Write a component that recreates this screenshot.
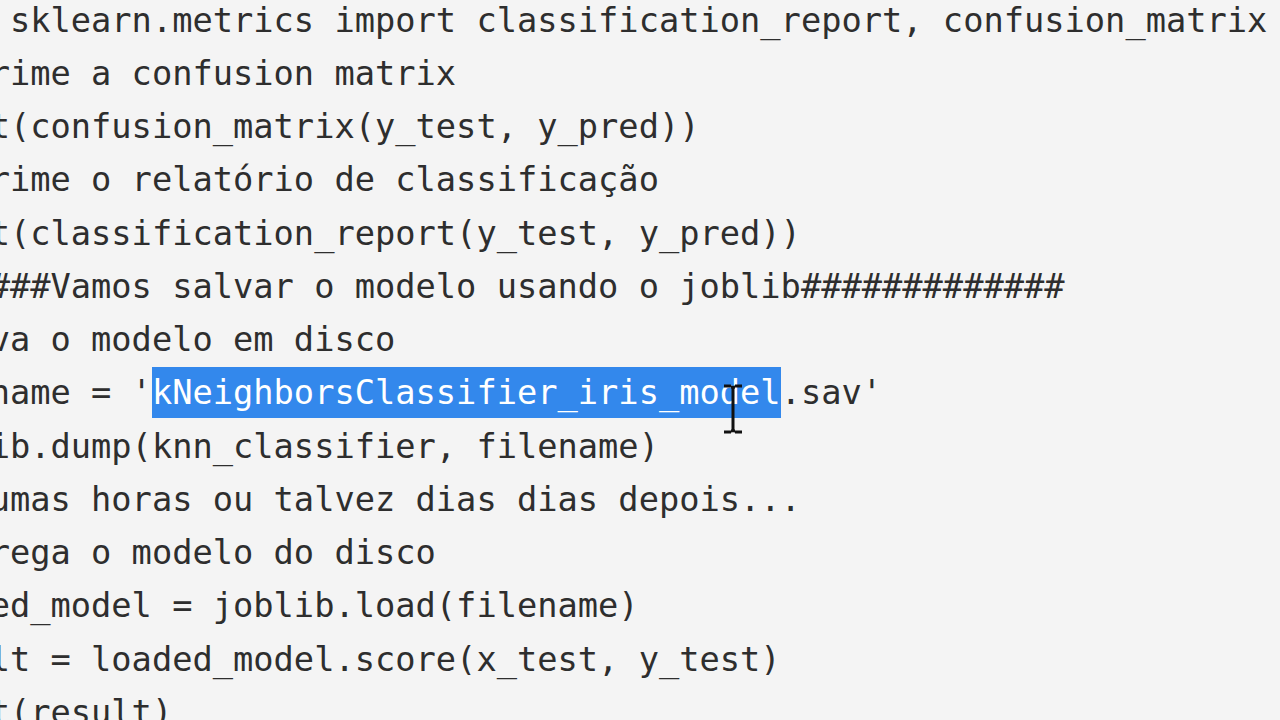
const lines: { text: string; sel?: [number, number] }[] = [
  { text: "from sklearn.metrics import classification_report, confusion_matrix" },
  { text: "#Imprime a confusion matrix" },
  { text: "print(confusion_matrix(y_test, y_pred))" },
  { text: "#Imprime o relatório de classificação" },
  { text: "print(classification_report(y_test, y_pred))" },
  { text: "#######Vamos salvar o modelo usando o joblib#############" },
  { text: "#Salva o modelo em disco" },
  { text: "filename = 'kNeighborsClassifier_iris_model.sav'", sel: [12, 43] },
  { text: "joblib.dump(knn_classifier, filename)" },
  { text: "#Algumas horas ou talvez dias dias depois..." },
  { text: "#Carrega o modelo do disco" },
  { text: "loaded_model = joblib.load(filename)" },
  { text: "result = loaded_model.score(x_test, y_test)" },
  { text: "print(result)" },
];

function CodeLine({ text, sel }: { text: string; sel?: [number, number] }) {
  if (!sel) return <div className="h-[53.25px] whitespace-pre">{text}</div>;
  return (
    <div className="h-[53.25px] whitespace-pre">
      {text.slice(0, sel[0])}
      <span className="bg-[#3388ec] py-[6px] text-white">{text.slice(sel[0], sel[1])}</span>
      {text.slice(sel[1])}
    </div>
  );
}

export default function App() {
  return (
    <div className="relative h-[720px] w-[1280px] overflow-hidden bg-[#f4f4f4]">
      <div
        className="ml-[-91.5px] mt-[-6.5px] text-[33.7px] leading-[53.25px] text-[#2e2e2e]"
        style={{ fontFamily: '"DejaVu Sans Mono", monospace' }}
      >
        {lines.map((l, i) => (
          <CodeLine key={i} text={l.text} sel={l.sel} />
        ))}
      </div>
      <svg className="absolute left-[722px] top-[384px]" width="22" height="50" viewBox="0 0 22 50">
        <path d="M2 2h7M13 2h7M11 2v46M2 48h7M13 48h7M9 3c1 0 2 0 2 2M13 3c-1 0-2 0-2 2M9 47c1 0 2 0 2-2M13 47c-1 0-2 0-2-2" stroke="#111" strokeWidth="3" fill="none" />
      </svg>
    </div>
  );
}
